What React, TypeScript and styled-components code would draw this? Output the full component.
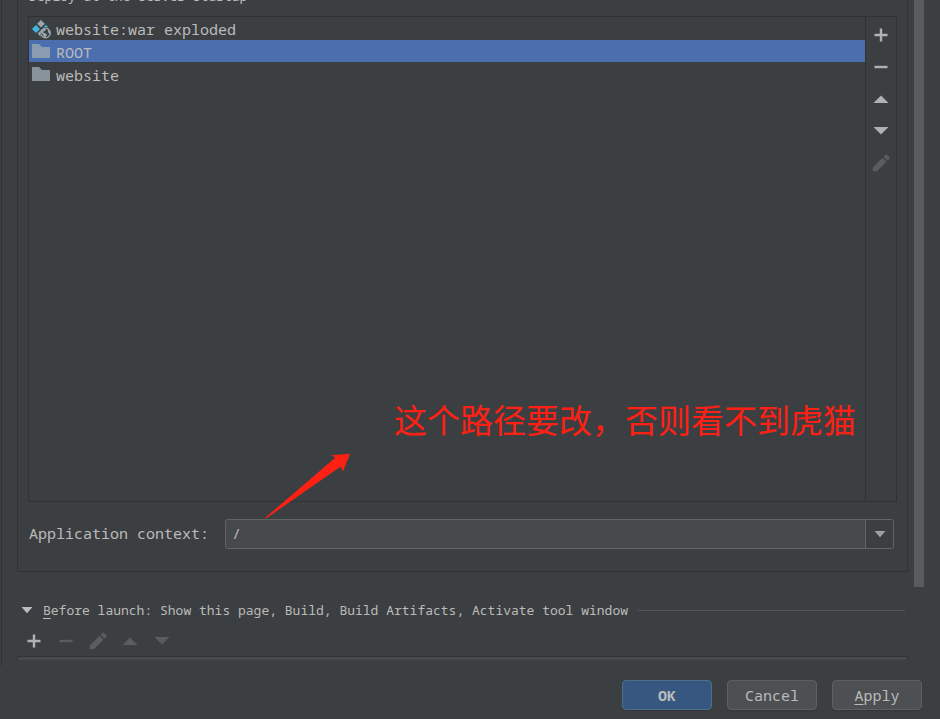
import React, { useState } from "react";
import styled, { createGlobalStyle, css } from "styled-components";

const color = {
  base: "#3c3f41",
  line: "#323232",
  field: "#45494a",
  fieldLine: "#646464",
  text: "#bbbbbb",
  icon: "#afb1b3",
  iconOff: "#5a5c5d",
  select: "#4b6eaf",
  note: "#ff2014",
};

const GlobalStyle = createGlobalStyle`
  *, *::before, *::after { box-sizing: border-box; }
  body {
    margin: 0;
    background: ${color.base};
    color: ${color.text};
    font: 15px/20px "Noto Sans Mono", "DejaVu Sans Mono", monospace;
  }
  button, input { font: inherit; color: inherit; }
`;

const Dialog = styled.div`
  display: flex;
  flex-direction: column;
  height: 100vh;
  min-height: 400px;
  overflow: hidden;
`;

const Body = styled.main`
  display: flex;
  flex: 1;
  min-height: 0;
  margin-left: 1px;
  border-left: 1px solid ${color.line};
`;

const Content = styled.div`
  display: flex;
  flex-direction: column;
  flex: 1;
  min-width: 0;
  padding: 0 6px 0 15px;
`;

const ScrollTrack = styled.div`
  width: 26px;
  padding-bottom: 79px;
`;

const ScrollThumb = styled.div`
  width: 10px;
  height: 100%;
  background: #5a5b5d;
`;

const Group = styled.section`
  position: relative;
  display: flex;
  flex-direction: column;
  flex: 1;
  min-height: 0;
  padding: 0 11px 22px 11px;
  border: 1px solid ${color.line};
  border-top: 0;
`;

const GroupTitle = styled.div`
  display: flex;
  align-items: flex-end;
  height: 4px;
  margin-bottom: 12px;
  overflow: hidden;
  font-size: 13px;
  line-height: 16px;
  white-space: nowrap;
`;

const ListPanel = styled.div`
  display: flex;
  flex: 1;
  min-height: 0;
  margin: 0 -1px;
  border: 1px solid ${color.line};
`;

const Artifacts = styled.ul`
  display: flex;
  flex-direction: column;
  gap: 1px;
  flex: 1;
  min-width: 0;
  margin: 0;
  padding: 0;
  list-style: none;
`;

const ArtifactRow = styled.button<{ $selected: boolean }>`
  display: flex;
  align-items: center;
  gap: 5px;
  width: 100%;
  height: 22px;
  padding: 2px 2px 0;
  border: 0;
  background: ${(p) => (p.$selected ? color.select : "transparent")};
  text-align: left;
  white-space: nowrap;
`;

const SideTools = styled.div`
  display: flex;
  flex-direction: column;
  align-items: center;
  gap: 8px;
  width: 31px;
  padding-top: 6px;
  border-left: 1px solid ${color.line};
`;

const BottomTools = styled.div`
  display: flex;
  gap: 8px;
  padding: 9px 0 3px 5px;
`;

const ToolButton = styled.button`
  display: grid;
  place-items: center;
  width: 24px;
  height: 24px;
  padding: 0;
  border: 0;
  background: none;
  color: ${color.icon};
  &:disabled { color: ${color.iconOff}; }
`;

const ContextRow = styled.div`
  display: flex;
  align-items: center;
  gap: 16px;
  margin-top: 17px;
  padding-right: 2px;
`;

const Combo = styled.div`
  display: flex;
  flex: 1;
  height: 30px;
  overflow: hidden;
  border: 1px solid ${color.fieldLine};
  border-radius: 3px;
`;

const ComboInput = styled.input`
  flex: 1;
  min-width: 0;
  padding: 0 6px 2px;
  border: 0;
  outline: 0;
  background: ${color.field};
`;

const ContextLabel = styled.label`
  padding-bottom: 2px;
`;

const ComboButton = styled.button`
  display: grid;
  place-items: center;
  width: 28px;
  padding: 0;
  border: 0;
  border-left: 1px solid ${color.fieldLine};
  background: ${color.base};
  color: #9c9ea0;
`;

const LaunchHeader = styled.button`
  display: flex;
  align-items: center;
  gap: 10px;
  margin-top: 28px;
  padding: 0 3px 0 4px;
  border: 0;
  background: none;
  font-size: 13px;
  line-height: 20px;
  text-align: left;
  white-space: nowrap;
  &::after {
    content: "";
    flex: 1;
    height: 1px;
    background: #555555;
  }
`;

const Mnemonic = styled.span`
  text-decoration: underline;
  text-underline-offset: 3px;
`;

const TaskList = styled.div`
  height: 4px;
  margin-bottom: 6px;
  border: 1px solid ${color.line};
  border-bottom: 0;
  background: ${color.field};
`;

const Footer = styled.footer`
  display: flex;
  justify-content: flex-end;
  gap: 15px;
  padding: 14px 18px 9px;
`;

const ActionButton = styled.button<{ $primary?: boolean }>`
  width: 90px;
  height: 30px;
  padding: 0;
  border: 1px solid #5e6060;
  border-radius: 4px;
  background: #4c5052;
  box-shadow: 0 1px 1px #35383a;
  ${(p) =>
    p.$primary &&
    css`
      border-color: #4c708c;
      background: #365880;
      font-weight: 700;
    `}
`;

const Note = styled.p`
  position: absolute;
  right: 51px;
  bottom: 128px;
  margin: 0;
  color: ${color.note};
  font: 33px/48px "Noto Sans CJK SC", sans-serif;
  white-space: nowrap;
`;

const Arrow = styled.svg`
  position: absolute;
  left: 246px;
  bottom: 51px;
`;

const PlusIcon = () => (
  <svg width="18" height="18" viewBox="0 0 18 18" aria-hidden="true">
    <path d="M2.5 9h13M9 2.5v13" stroke="currentColor" strokeWidth="2.4" />
  </svg>
);
const MinusIcon = () => (
  <svg width="18" height="18" viewBox="0 0 18 18" aria-hidden="true">
    <path d="M2.5 9h13" stroke="currentColor" strokeWidth="2.4" />
  </svg>
);
const UpIcon = () => (
  <svg width="18" height="18" viewBox="0 0 18 18" aria-hidden="true">
    <path d="M1.5 13 9 5.5l7.5 7.5z" fill="currentColor" />
  </svg>
);
const DownIcon = () => (
  <svg width="18" height="18" viewBox="0 0 18 18" aria-hidden="true">
    <path d="M1.5 5 9 12.5 16.500 5z" fill="currentColor" />
  </svg>
);
const PencilIcon = () => (
  <svg width="18" height="18" viewBox="0 0 18 18" aria-hidden="true">
    <path d="M.8 13.400 10.500 3.700l4 4L4.800 17.300H.8zM11.500 2.700 13.200 1q1-.8 2 0l2 2q.8 1 0 2l-1.700 1.700z" fill="currentColor" />
  </svg>
);
const SmallDownIcon = () => (
  <svg width="12" height="8" viewBox="0 0 12 8" aria-hidden="true">
    <path d="M.5 1h11L6 7.200z" fill="currentColor" />
  </svg>
);
const FolderIcon = () => (
  <svg width="20" height="20" viewBox="0 0 20 20" aria-hidden="true">
    <path d="M1 2h7l3 3h8v11H1z" fill="#9aa7b0" fillOpacity=".8" />
  </svg>
);
const WarIcon = () => (
  <svg width="20" height="20" viewBox="0 0 20 20" aria-hidden="true">
    <path d="m10 1 3.800 3.800-3.800 3.800-3.800-3.800z" fill="#9aa7b0" />
    <path d="m5 6 4 4-4 4-4-4z" fill="#40b6e0" />
    <path d="m12.200 8.300 2.800-2.300 2.700 2.600q-3-1-5.500-.3z" fill="#40b6e0" />
    <path d="m10 11-3.300 3.500L9.800 18q-1.600-3.500.2-7z" fill="#9aa7b0" />
    <circle cx="14.500" cy="14" r="4.800" fill="none" stroke="#9aa7b0" strokeWidth="1.300" />
    <path d="m9.800 13 1.700-2.800 3.500-.7-.5 2-2 1v1.500l2.500.5 1 1.500-1.500 2.500-2-.5-.5-2.300zM16.500 9.800l2.500 2.700v2.500l-1.500-1-.5-1.500z" fill="#9aa7b0" />
  </svg>
);

const artifacts = [
  { name: "website:war exploded", Icon: WarIcon },
  { name: "ROOT", Icon: FolderIcon },
  { name: "website", Icon: FolderIcon },
];

const sideTools = [
  { label: "Add", Icon: PlusIcon },
  { label: "Remove", Icon: MinusIcon },
  { label: "Move up", Icon: UpIcon },
  { label: "Move down", Icon: DownIcon },
  { label: "Edit", Icon: PencilIcon, disabled: true },
];

const launchTools = [
  { label: "Add task", Icon: PlusIcon },
  { label: "Remove task", Icon: MinusIcon, disabled: true },
  { label: "Edit task", Icon: PencilIcon, disabled: true },
  { label: "Move task up", Icon: UpIcon, disabled: true },
  { label: "Move task down", Icon: DownIcon, disabled: true },
];

export default function App() {
  const [selected, setSelected] = useState("ROOT");
  const [context, setContext] = useState("/");

  return (
    <Dialog>
      <GlobalStyle />
      <Body>
        <Content>
          <Group>
            <GroupTitle>Deploy at the server startup</GroupTitle>
            <ListPanel>
              <Artifacts>
                {artifacts.map(({ name, Icon }) => (
                  <li key={name}>
                    <ArtifactRow
                      type="button"
                      $selected={name === selected}
                      aria-pressed={name === selected}
                      onClick={() => setSelected(name)}
                    >
                      <Icon />
                      {name}
                    </ArtifactRow>
                  </li>
                ))}
              </Artifacts>
              <SideTools>
                {sideTools.map(({ label, Icon, disabled }) => (
                  <ToolButton key={label} type="button" aria-label={label} disabled={disabled}>
                    <Icon />
                  </ToolButton>
                ))}
              </SideTools>
            </ListPanel>
            <ContextRow>
              <ContextLabel htmlFor="context">Application context:</ContextLabel>
              <Combo>
                <ComboInput id="context" value={context} onChange={(e) => setContext(e.target.value)} />
                <ComboButton type="button" aria-label="Show contexts">
                  <SmallDownIcon />
                </ComboButton>
              </Combo>
            </ContextRow>
            <Note>这个路径要改，否则看不到虎猫</Note>
            <Arrow width="88" height="68" viewBox="0 0 88 68" aria-hidden="true">
              <path d="M1 66 71.500 5.500 67 3.300 86 1.700 79 19.500 76.700 14.500 2 66.500z" fill={color.note} />
            </Arrow>
          </Group>
          <LaunchHeader type="button" aria-expanded="true">
            <SmallDownIcon />
            <span>
              <Mnemonic>B</Mnemonic>efore launch: Show this page, Build, Build Artifacts, Activate tool window
            </span>
          </LaunchHeader>
          <BottomTools>
            {launchTools.map(({ label, Icon, disabled }) => (
              <ToolButton key={label} type="button" aria-label={label} disabled={disabled}>
                <Icon />
              </ToolButton>
            ))}
          </BottomTools>
          <TaskList />
        </Content>
        <ScrollTrack>
          <ScrollThumb />
        </ScrollTrack>
      </Body>
      <Footer>
        <ActionButton type="button" $primary>OK</ActionButton>
        <ActionButton type="button">Cancel</ActionButton>
        <ActionButton type="button">
          <Mnemonic>A</Mnemonic>pply
        </ActionButton>
      </Footer>
    </Dialog>
  );
}
